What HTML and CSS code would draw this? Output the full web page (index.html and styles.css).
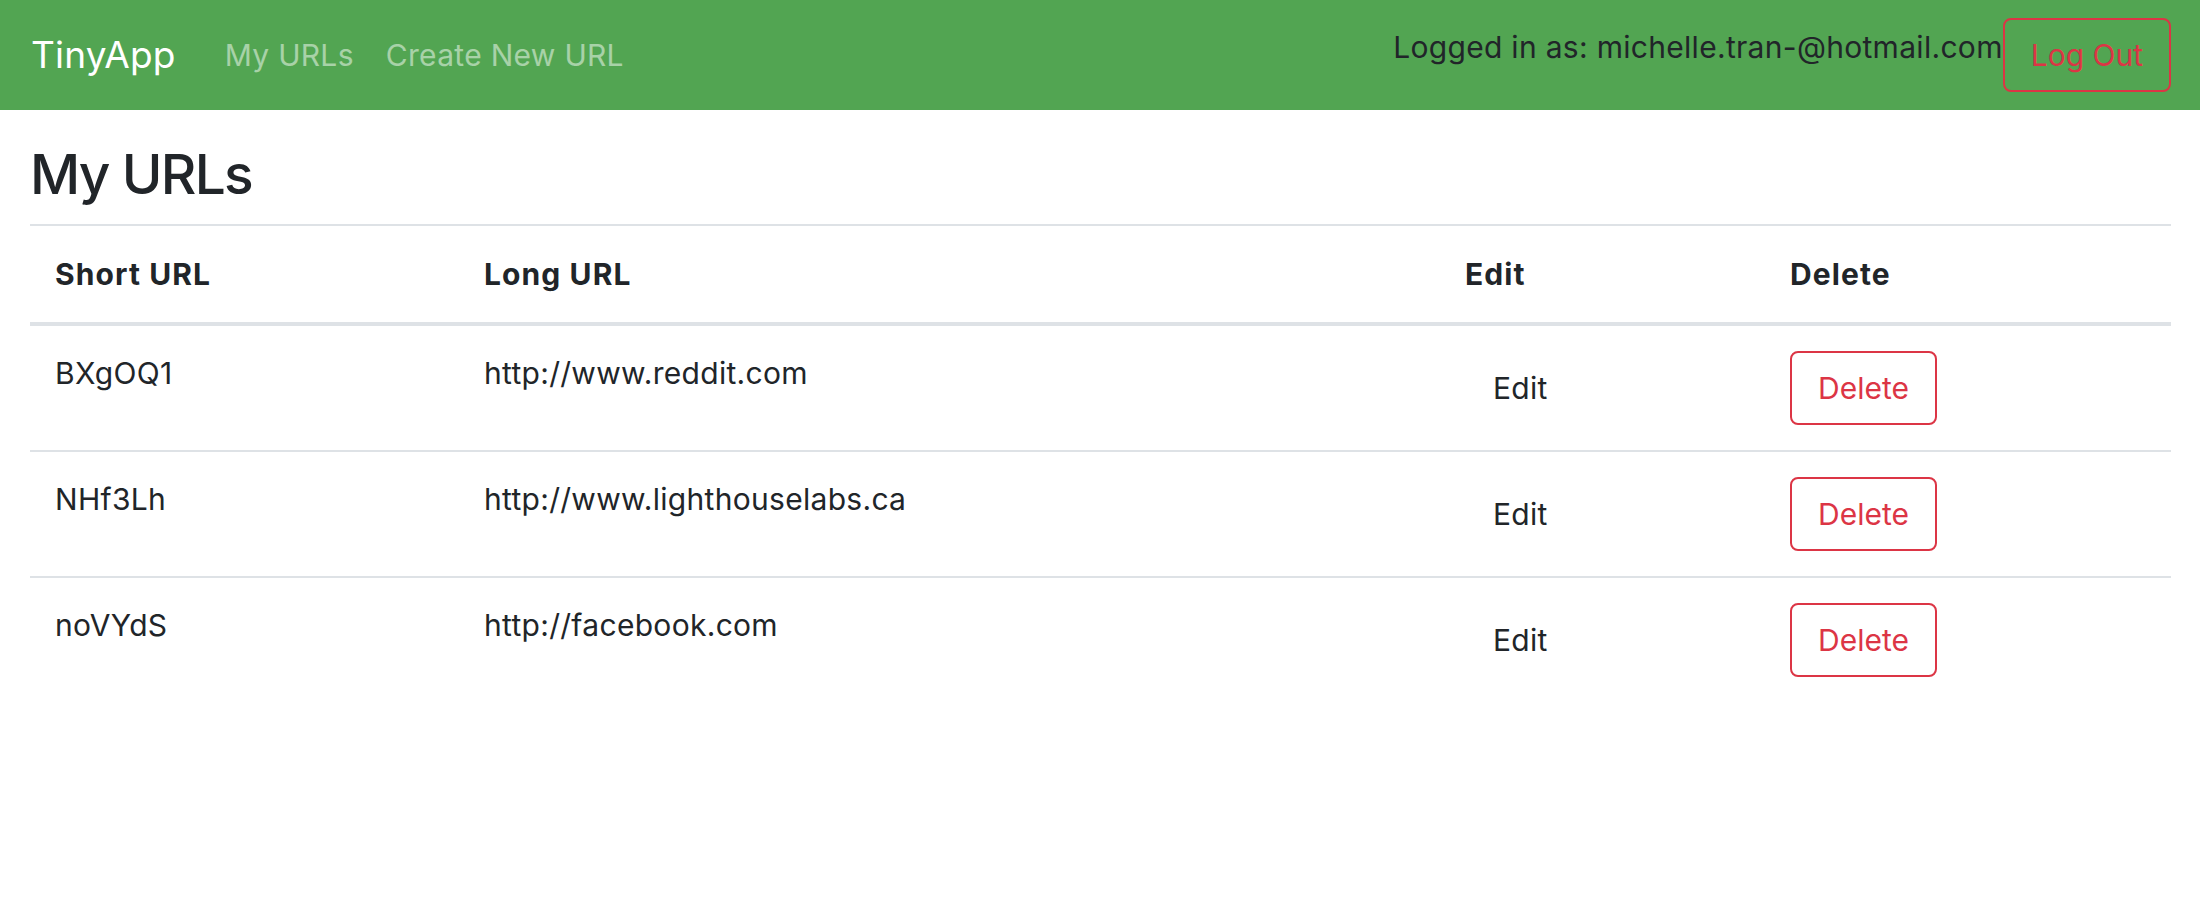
FILE: index.html
```html
<!DOCTYPE html>
<html lang="en">
<head>
<meta charset="utf-8">
<title>TinyApp</title>
<link rel="stylesheet" href="styles.css">
</head>
<body>
<nav class="navbar">
  <a class="brand" href="#">TinyApp</a>
  <div class="nav-links">
    <a class="nav-link" href="#">My URLs</a>
    <a class="nav-link" href="#">Create New URL</a>
  </div>
  <div class="nav-right">
    <span class="nav-text">Logged in as: michelle.tran-@hotmail.com</span>
    <button class="btn btn-danger-outline">Log Out</button>
  </div>
</nav>
<main class="container">
  <h1 class="title">My URLs</h1>
  <table class="url-table">
    <thead>
      <tr>
        <th class="col-short">Short URL</th>
        <th class="col-long">Long URL</th>
        <th class="col-edit">Edit</th>
        <th class="col-delete">Delete</th>
      </tr>
    </thead>
    <tbody>
      <tr>
        <td>BXgOQ1</td>
        <td>http://www.reddit.com</td>
        <td class="cell-action"><button class="btn btn-plain">Edit</button></td>
        <td class="cell-action"><button class="btn btn-danger-outline">Delete</button></td>
      </tr>
      <tr>
        <td>NHf3Lh</td>
        <td>http://www.lighthouselabs.ca</td>
        <td class="cell-action"><button class="btn btn-plain">Edit</button></td>
        <td class="cell-action"><button class="btn btn-danger-outline">Delete</button></td>
      </tr>
      <tr>
        <td>noVYdS</td>
        <td>http://facebook.com</td>
        <td class="cell-action"><button class="btn btn-plain">Edit</button></td>
        <td class="cell-action"><button class="btn btn-danger-outline">Delete</button></td>
      </tr>
    </tbody>
  </table>
</main>
</body>
</html>
```
FILE: styles.css
```css
* { box-sizing: border-box; }

html, body {
  margin: 0;
  padding: 0;
  background: #ffffff;
}

body {
  font-family: Inter, "Noto Sans", "Liberation Sans", sans-serif;
  font-size: 30px;
  line-height: 45px;
  color: #212529;
  letter-spacing: 0.3px;
}

.navbar {
  display: flex;
  align-items: center;
  height: 110px;
  padding: 0 29px 0 31px;
  background: #52a552;
}

.brand {
  font-size: 37px;
  line-height: 56px;
  color: #ffffff;
  text-decoration: none;
  margin-right: 33px;
  letter-spacing: 0.2px;
}

.nav-links {
  display: flex;
}

.nav-link {
  color: rgba(255, 255, 255, 0.5);
  text-decoration: none;
  padding: 0 16px;
}

.nav-right {
  margin-left: auto;
  display: flex;
  align-items: center;
}

.nav-text {
  color: #212529;
  padding-bottom: 16px;
}

.btn {
  font-family: inherit;
  font-size: 30px;
  line-height: 44px;
  letter-spacing: 0;
  padding: 13px 26px;
  border: 2px solid transparent;
  border-radius: 8px;
  background: transparent;
  cursor: pointer;
}

.btn-danger-outline {
  color: #dc3545;
  border-color: #dc3545;
}

.btn-plain {
  color: #212529;
  letter-spacing: 0.3px;
}

.container {
  padding: 0 29px 0 30px;
}

.title {
  margin: 30px 0 16px;
  font-size: 55px;
  line-height: 68px;
  font-weight: 500;
  letter-spacing: -1.7px;
}

.url-table {
  width: 100%;
  border-collapse: collapse;
}

.url-table th,
.url-table td {
  text-align: left;
  vertical-align: top;
  padding: 25px;
  border-top: 2px solid #dee2e6;
}

.url-table th {
  padding-top: 26px;
  font-weight: 700;
  letter-spacing: 1.1px;
  border-bottom: 4px solid #dee2e6;
}

.url-table .cell-action {
  vertical-align: middle;
}

.col-short { width: 429px; }
.col-long { width: 981px; }
.col-edit { width: 325px; }
.col-delete { width: auto; }
```
